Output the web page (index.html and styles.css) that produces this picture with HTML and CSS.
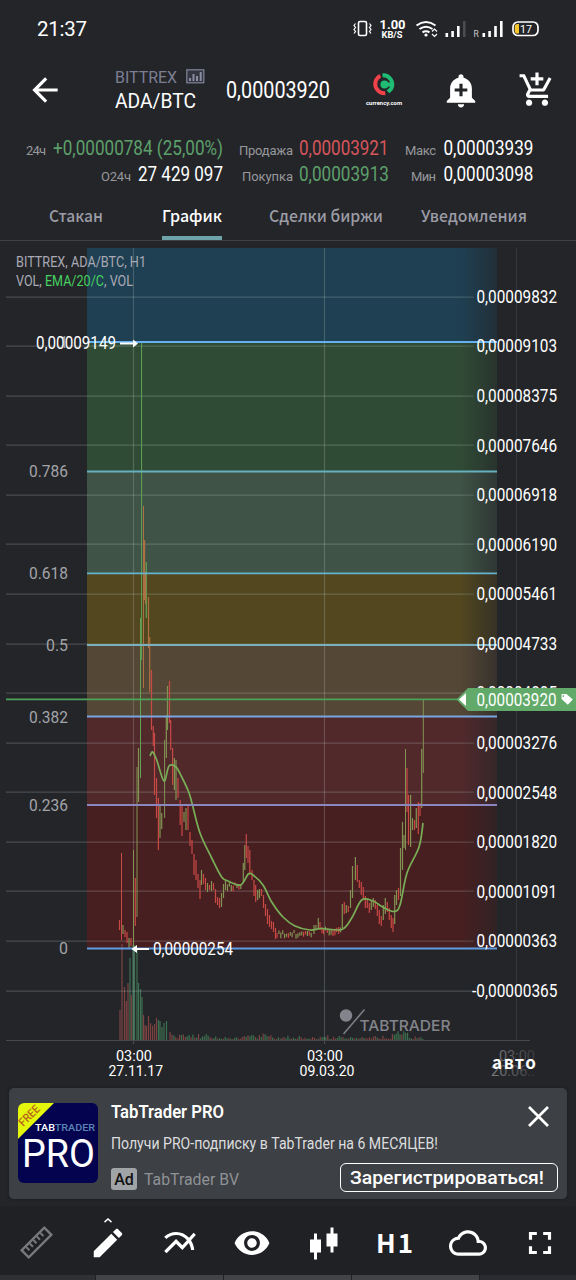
FILE: index.html
```html
<!DOCTYPE html>
<html lang="ru">
<head>
<meta charset="utf-8">
<title>TabTrader</title>
<link rel="stylesheet" href="styles.css">
</head>
<body>
<div class="app">
  <header class="status">
    <svg class="txt clock" width="50" height="20"><text x="0" y="17" textLength="50">21:37</text></svg>
    <svg class="status-icons" width="190" height="24" viewBox="350 17 190 24">
      <rect x="358.500" y="21.500" width="8" height="14" rx="1.500" fill="none" stroke="#fff" stroke-width="1.600"/>
      <path d="M355.500 23.500l-1.500 2 1.500 2-1.500 2 1.500 2-1.500 2M369.500 23.500l1.500 2-1.500 2 1.500 2-1.500 2 1.500 2" fill="none" stroke="#fff" stroke-width="1.200"/>
      <text x="379.500" y="29" font-size="12.500" font-weight="700" textLength="26" lengthAdjust="spacingAndGlyphs">1.00</text>
      <text x="381.500" y="38" font-size="9" font-weight="700" textLength="21" lengthAdjust="spacingAndGlyphs">KB/S</text>
      <g fill="none" stroke="#fff" stroke-width="2">
        <path d="M416.500 25.500q9.500-7 19 0M419.500 29q6.500-4.600 13 0M422.500 32.300q3.500-2.300 7 0"/>
      </g>
      <circle cx="426" cy="35" r="1.600"/>
      <path d="M432 31.500l2.500-2.500 2.500 2.500M432 34l2.500 2.500 2.500-2.500" fill="none" stroke="#fff" stroke-width="1.200"/>
      <path d="M445.500 33h2.600v4h-2.600zM451.300 31h2.600v6h-2.600zM457 26h2.600v11H457z"/>
      <path d="M463 21h2.600v16H463z" fill="#4b4c50"/>
      <text x="473.500" y="37" font-size="8.500" fill="#ccc">R</text>
      <path d="M482.500 33h2.600v4h-2.600zM488.300 31h2.600v6h-2.600zM494.200 26h2.600v11h-2.600zM500 21h2.600v16H500z"/>
      <rect x="513" y="22" width="25" height="13.500" rx="5" fill="none" stroke="#fff" stroke-width="1.700"/>
      <path d="M519 24v9.500h-1.500q-2.800 0-2.800-2.800v-3.900q0-2.800 2.800-2.800z" fill="#f5c52c"/>
      <text x="520" y="33" font-size="11.500" textLength="12" lengthAdjust="spacingAndGlyphs">17</text>
    </svg>
  </header>

  <nav class="topbar">
    <svg class="icon back" viewBox="0 0 24 24"><path d="M20 11H7.830l5.590-5.590L12 4l-8 8 8 8 1.410-1.410L7.830 13H20v-2z"/></svg>
    <div class="pair">
      <div class="exchange">
        <svg class="txt" width="62" height="20"><text x="0" y="15" textLength="62" lengthAdjust="spacingAndGlyphs">BITTREX</text></svg>
        <svg class="bars" width="19" height="15" viewBox="0 0 19 15"><rect x=".8" y=".8" width="17" height="13" fill="#34353f" stroke="#7b7e93" stroke-width="1.300"/><path d="M3 9h2v3H3zM6.500 5h2v7h-2zM10 7h2v5h-2zM13.700 3h2v9h-2z" fill="#8a8da3"/></svg>
      </div>
      <svg class="txt symbol" width="81" height="22"><text x="0" y="17" textLength="81" lengthAdjust="spacingAndGlyphs">ADA/BTC</text></svg>
    </div>
    <svg class="txt last" width="105" height="28"><text x="0" y="22" textLength="104" lengthAdjust="spacingAndGlyphs">0,00003920</text></svg>
    <svg class="brand" width="38" height="36" viewBox="365 71 38 36">
      <path d="M380.300 75.700a9.200 9.200 0 0 0 5 17.400" fill="none" stroke="#f04248" stroke-width="4"/>
      <path d="M382.500 75.200a9.200 9.200 0 0 1 8.600 13.600l-3 3" fill="none" stroke="#1fbd74" stroke-width="4"/>
      <path d="M393 84.500h-9" stroke="#1fbd74" stroke-width="4"/>
      <circle cx="384.500" cy="84.500" r="4" fill="#1fbd74"/>
      <text x="366" y="105" textLength="36" lengthAdjust="spacingAndGlyphs">currency.com</text>
    </svg>
    <svg class="icon bell" viewBox="0 0 24 24"><path d="M10.010 21.010c0 1.100.89 1.990 1.990 1.990s1.990-.89 1.990-1.990h-3.980zm8.870-4.190V11c0-3.250-2.250-5.970-5.290-6.690v-.72C13.590 2.710 12.880 2 12 2s-1.590.71-1.590 1.590v.72C7.370 5.030 5.120 7.750 5.120 11v5.820L3 18.940V20h18v-1.060l-2.120-2.120zM16 13.010h-3v3h-2v-3H8V11h3V8h2v3h3v2.010z"/></svg>
    <svg class="icon cart" viewBox="0 0 24 24"><path d="M11 9h2V6h3V4h-3V1h-2v3H8v2h3v3zm-4 9c-1.100 0-1.990.9-1.990 2S5.900 22 7 22s2-.9 2-2-.9-2-2-2zm10 0c-1.100 0-1.990.9-1.990 2s.89 2 1.990 2 2-.9 2-2-.9-2-2-2zm-9.830-3.250l.03-.12.9-1.630h7.450c.75 0 1.410-.41 1.750-1.030l3.860-7.010L19.420 4h-.01l-1.100 2-2.760 5H8.530l-.13-.27L6.160 6l-.95-2-.94-2H1v2h2l3.600 7.590-1.350 2.450c-.16.28-.25.61-.25.96 0 1.100.9 2 2 2h12v-2H7.420c-.13 0-.25-.11-.25-.25z"/></svg>
  </nav>

  <section class="stats">
    <div class="stat-col">
      <div class="stat"><svg class="txt label" width="20" height="26"><text y="18.800" textLength="20">24ч</text></svg><svg class="txt value up" width="170" height="26"><text y="18.800" textLength="170" lengthAdjust="spacingAndGlyphs">+0,00000784 (25,00%)</text></svg></div>
      <div class="stat"><svg class="txt label" width="30" height="26"><text y="18.800" textLength="30">О24ч</text></svg><svg class="txt value" width="85" height="26"><text y="18.800" textLength="85" lengthAdjust="spacingAndGlyphs">27 429 097</text></svg></div>
    </div>
    <div class="stat-col">
      <div class="stat"><svg class="txt label" width="54" height="26"><text y="18.800" textLength="54">Продажа</text></svg><svg class="txt value down" width="90" height="26"><text y="18.800" textLength="89.500" lengthAdjust="spacingAndGlyphs">0,00003921</text></svg></div>
      <div class="stat"><svg class="txt label" width="51" height="26"><text y="18.800" textLength="51">Покупка</text></svg><svg class="txt value up" width="90" height="26"><text y="18.800" textLength="90" lengthAdjust="spacingAndGlyphs">0,00003913</text></svg></div>
    </div>
    <div class="stat-col">
      <div class="stat"><svg class="txt label" width="31" height="26"><text y="18.800" textLength="31">Макс</text></svg><svg class="txt value" width="90" height="26"><text x=".5" y="18.800" textLength="90" lengthAdjust="spacingAndGlyphs">0,00003939</text></svg></div>
      <div class="stat"><svg class="txt label" width="25" height="26"><text y="18.800" textLength="25">Мин</text></svg><svg class="txt value" width="90" height="26"><text x=".5" y="18.800" textLength="90" lengthAdjust="spacingAndGlyphs">0,00003098</text></svg></div>
    </div>
  </section>

  <nav class="tabs">
    <div class="tab"><svg class="txt" width="54" height="36"><text y="21.500" textLength="54" lengthAdjust="spacingAndGlyphs">Стакан</text></svg></div>
    <div class="tab active"><svg class="txt" width="60" height="36"><text y="21.500" textLength="60" lengthAdjust="spacingAndGlyphs">График</text></svg></div>
    <div class="tab"><svg class="txt" width="114" height="36"><text y="21.500" textLength="114" lengthAdjust="spacingAndGlyphs">Сделки биржи</text></svg></div>
    <div class="tab"><svg class="txt" width="106" height="36"><text y="21.500" textLength="106" lengthAdjust="spacingAndGlyphs">Уведомления</text></svg></div>
  </nav>

  <main class="chart">
    <svg id="chart" width="576" height="847" viewBox="0 241 576 847">
      <defs>
        <linearGradient id="fade" x1="460" x2="520" y1="0" y2="0" gradientUnits="userSpaceOnUse">
          <stop offset="0" stop-color="#242529" stop-opacity="0"/><stop offset=".62" stop-color="#242529" stop-opacity=".62"/><stop offset=".63" stop-color="#242529" stop-opacity=".62"/>
        </linearGradient>
        <linearGradient id="dateFade" x1="495" x2="540" y1="0" y2="0" gradientUnits="userSpaceOnUse">
          <stop offset="0" stop-color="#77787b"/><stop offset="1" stop-color="#303135"/>
        </linearGradient>
      </defs>
      <g id="bands"></g>
      <g id="volume"></g>
      <g id="grid"></g>
      <g id="candles"></g>
      <path id="ema" class="ema" d=""/>
      <path class="price-line" d="M6 699.300H458"/>
      <rect x="460" y="248" width="37" height="699" fill="url(#fade)"/>
      <g id="levels"></g>
      <g class="legend">
        <text x="16" y="267" textLength="130" lengthAdjust="spacingAndGlyphs">BITTREX, ADA/BTC, H1</text>
        <text x="16" y="285.500" textLength="117" lengthAdjust="spacingAndGlyphs">VOL, <tspan class="legend-ema">EMA/20/C</tspan>, VOL</text>
      </g>
      <g id="labels"></g>
      <g class="marker">
        <text x="36" y="349.300" textLength="80" lengthAdjust="spacingAndGlyphs">0,00009149</text>
        <path d="M120 342.500h13v-3l5 4-5 4v-3h-13z"/>
        <text x="153" y="954.800" textLength="80" lengthAdjust="spacingAndGlyphs">0,00000254</text>
        <path d="M149 948h-12v-3l-5.500 4 5.500 4v-3h12z"/>
      </g>
      <g class="watermark">
        <circle cx="346" cy="1015.500" r="6.200"/>
        <path d="M343.500 1034L364.500 1009.500" stroke="#7c7d84" stroke-width="1.600"/>
        <text x="359.500" y="1031.300" textLength="91" lengthAdjust="spacingAndGlyphs">TABTRADER</text>
      </g>
      <g class="dates">
        <text x="116" y="1061" textLength="36" lengthAdjust="spacingAndGlyphs">03:00</text>
        <text x="108.500" y="1075.700" textLength="54.500" lengthAdjust="spacingAndGlyphs">27.11.17</text>
        <text x="307" y="1061" textLength="36" lengthAdjust="spacingAndGlyphs">03:00</text>
        <text x="299.500" y="1075.700" textLength="55" lengthAdjust="spacingAndGlyphs">09.03.20</text>
        <text x="499" y="1061" textLength="36" lengthAdjust="spacingAndGlyphs" fill="url(#dateFade)">03:00</text>
        <text x="491" y="1075.700" textLength="44" lengthAdjust="spacingAndGlyphs" fill="url(#dateFade)">20.06..</text>
      </g>
      <text class="auto" x="492" y="1069" textLength="44">авто</text>
      <g>
        <path d="M456.500 699.500L468 688H576V711H468z" fill="#62aa69"/>
        <path d="M459 699.500l7-6.500v13z" fill="#fff"/>
        <text class="axis" x="476.500" y="705.700" textLength="80" lengthAdjust="spacingAndGlyphs">0,00003920</text>
        <path d="M561.500 694h5l6.300 5.500-5 5.200-6.300-5.700v-5zm1.700 1.200a.8.8 0 1 0 .1 0z" fill="#fff" fill-rule="evenodd"/>
      </g>
    </svg>
  </main>

  <aside class="ad">
    <svg class="ad-logo" width="80" height="80" viewBox="0 0 80 80">
      <clipPath id="logoClip"><rect width="80" height="80" rx="6"/></clipPath>
      <g clip-path="url(#logoClip)">
        <rect width="80" height="80" fill="#03034f"/>
        <path d="M0 0H36L0 36z" fill="#e5f60d"/>
        <text x="5.300" y="24" font-size="11.500" font-weight="500" fill="#b7651c" textLength="24.500" lengthAdjust="spacingAndGlyphs" transform="rotate(-45 5.300 24)">FREE</text>
        <text x="17" y="27.800" font-size="9.800" font-weight="500" fill="#fff" textLength="60" lengthAdjust="spacingAndGlyphs">TAB<tspan fill="#5b85b5">TRADER</tspan></text>
        <text x="4" y="64" font-size="38" fill="#fff" textLength="73" lengthAdjust="spacingAndGlyphs">PRO</text>
      </g>
    </svg>
    <div class="ad-body">
      <div class="ad-head">
        <svg class="txt ad-title" width="113" height="26"><text y="19" textLength="113" lengthAdjust="spacingAndGlyphs">TabTrader PRO</text></svg>
        <svg class="close" width="21" height="21" viewBox="0 0 21 21"><path d="M1 1l19 19M20 1L1 20"/></svg>
      </div>
      <svg class="txt ad-text" width="327" height="26"><text y="18.500" textLength="327" lengthAdjust="spacingAndGlyphs">Получи PRO-подписку в TabTrader на 6 МЕСЯЦЕВ!</text></svg>
      <div class="ad-foot">
        <span class="badge">Ad</span>
        <svg class="txt ad-by" width="95" height="24"><text y="18" textLength="95" lengthAdjust="spacingAndGlyphs">TabTrader BV</text></svg>
        <div class="button"><svg class="txt" width="194" height="26"><text y="20" textLength="194" lengthAdjust="spacingAndGlyphs">Зарегистрироваться!</text></svg></div>
      </div>
    </div>
  </aside>

  <footer class="toolbar">
    <div class="tool"><svg class="icon" viewBox="0 0 38 38"><g transform="translate(19.500 18.500) rotate(-45)" fill="none" stroke="#77797c"><rect x="-16" y="-5" width="32" height="10" stroke-width="2.400"/><path d="M-10.500-4v4.500M-5.500-4v4.500M-.5-4v4.500M4.500-4v4.500M9.500-4v4.500" stroke-width="2"/></g></svg></div>
    <div class="tool"><svg class="icon" viewBox="0 0 24 24"><path d="M3 17.250V21h3.750L17.810 9.940l-3.750-3.750L3 17.250zM20.710 7.040c.39-.39.39-1.020 0-1.410l-2.340-2.340c-.39-.39-1.020-.39-1.410 0l-1.830 1.830 3.750 3.750 1.830-1.830z"/><path d="M9.800-1.200L12-3.200l2.200 2" fill="none" stroke="#fff" stroke-width=".9"/></svg></div>
    <div class="tool"><svg class="icon" viewBox="0 0 24 24"><path d="M22 6.920l-1.410-1.410-2.850 3.210C15.680 6.400 12.830 5 9.610 5 6.720 5 4.070 6.160 2 8l1.420 1.420C5.120 7.930 7.270 7 9.610 7c2.740 0 5.090 1.260 6.770 3.240l-2.880 3.240-4-4L2 16.990l1.500 1.500 6-6.010 4 4 4.050-4.550c.75 1.350 1.250 2.900 1.440 4.550H21c-.22-2.300-.95-4.390-2.040-6.140L22 6.920z"/></svg></div>
    <div class="tool"><svg class="icon" viewBox="0 0 24 24"><path d="M12 4.500C7 4.500 2.730 7.610 1 12c1.730 4.390 6 7.500 11 7.500s9.270-3.110 11-7.500c-1.730-4.390-6-7.500-11-7.500zM12 17c-2.760 0-5-2.240-5-5s2.240-5 5-5 5 2.240 5 5-2.240 5-5 5zm0-8c-1.660 0-3 1.340-3 3s1.340 3 3 3 3-1.340 3-3-1.340-3-3-3z"/></svg></div>
    <div class="tool"><svg class="icon" viewBox="0 0 38 38"><path d="M9 9.500h3v6h4v13h-4v7H9v-7H5v-13h4zM25.500 3.500h3v6h4v13h-4v6h-3v-6h-4v-13h4z"/></svg></div>
    <div class="tool"><svg class="txt frame" width="38" height="38"><text x="-1" y="29" textLength="37">H1</text></svg></div>
    <div class="tool"><svg class="icon" viewBox="0 0 24 24"><path d="M19.350 10.040C18.670 6.590 15.640 4 12 4 9.110 4 6.600 5.640 5.350 8.040 2.340 8.360 0 10.910 0 14c0 3.310 2.690 6 6 6h13c2.760 0 5-2.240 5-5 0-2.640-2.050-4.780-4.650-4.960zM19 18H6c-2.210 0-4-1.790-4-4s1.790-4 4-4h.71C7.370 7.690 9.480 6 12 6c3.040 0 5.500 2.460 5.500 5.500v.5H19c1.660 0 3 1.340 3 3s-1.340 3-3 3z"/></svg></div>
    <div class="tool"><svg class="icon" viewBox="0 0 24 24"><path d="M7 14H5v5h5v-2H7v-3zm-2-4h2V7h3V5H5v5zm12 7h-3v2h5v-5h-2v3zM14 5v2h3v3h2V5h-5z"/></svg></div>
  </footer>
  <div class="strip"><i></i><i></i><i></i><i></i><i></i></div>
</div>
<script src="chart.js"></script>
</body>
</html>
```
FILE: styles.css
```css
* { box-sizing: border-box; }
body { margin: 0; background: #242529; font-family: Roboto, "Noto Sans", sans-serif; color: #fff; }
svg { display: block; fill: #fff; flex: none; }
.app { width: 576px; height: 1280px; overflow: hidden; display: flex; flex-direction: column; }
.txt { overflow: visible; }
.icon { width: 38px; height: 38px; overflow: visible; }

.status { height: 58px; padding: 17px 36px 0 37px; display: flex; justify-content: space-between; }
.clock { font-size: 20.5px; margin-top: 2px; }

.topbar { height: 78px; padding-left: 26px; display: flex; align-items: flex-start; }
.back { margin-top: 12.5px; }
.pair { margin: 10px 0 0 51px; width: 111px; }
.exchange { display: flex; gap: 9px; font-size: 16.5px; }
.exchange .txt { fill: #7b7e93; }
.bars { margin-top: 1px; }
.symbol { font-size: 19.5px; margin-top: 3px; }
.last { margin-top: 18px; font-size: 23px; }
.brand { margin: 13px 0 0 34px; font-size: 6px; font-weight: 700; }
.bell { margin: 12.5px 0 0 38.5px; }
.cart { margin: 12.5px 0 0 38.5px; }

.stats { height: 64px; display: flex; gap: 16px; padding-left: 26px; }
.stat-col { display: flex; flex-direction: column; align-items: flex-end; }
.stat { display: flex; gap: 7px; }
.stat-col:nth-child(2) .stat { gap: 6px; }
.label { font-size: 13px; fill: #97989c; }
.value { font-size: 19.5px; }
.up { fill: #5da06b; }
.down { fill: #d7555b; }

.tabs { height: 41px; display: flex; padding-left: 49px; border-bottom: 1px solid #404145; font: 500 16.5px "Noto Sans CJK SC", "Noto Sans", sans-serif; }
.tab { height: 40px; margin-right: 47px; }
.tab:first-child { margin-right: 59px; }
.tab:nth-child(3) { margin-right: 38px; }
.tab .txt { fill: #9b9ca5; }
.tab.active .txt { fill: #fff; }
.tab.active { border-bottom: 4px solid #6fa3aa; border-radius: 2px 2px 0 0; }

.chart { height: 847px; flex: none; }
.grid-line { stroke: #d8ecec; stroke-opacity: .2; stroke-width: 1.2; }
.ema { fill: none; stroke: #79ae58; stroke-width: 1.7; stroke-linejoin: round; }
.price-line { stroke: #4ba35b; stroke-width: 1.7; }
.legend { fill: #a8a9b4; font-size: 15px; }
.legend-ema { fill: #46d160; }
.axis { font-size: 17.8px; }
.fib { font-size: 17px; fill: #a3a4a8; }
.marker { font-size: 18px; }
.watermark { fill: #84858c; font: 500 15px Inter, sans-serif; }
.dates { font-size: 14.8px; }
.auto { font: 700 17px "Noto Sans CJK SC", "Noto Sans", sans-serif; }

.ad { margin: 0 9px; height: 111px; flex: none; display: flex; gap: 13px; background: #3d4044; border-radius: 5px; padding: 0 9px; box-shadow: 0 0 3px #1c1d20; }
.ad-logo { margin-top: 15px; }
.ad-body { flex: 1; display: flex; flex-direction: column; }
.ad-head { display: flex; justify-content: space-between; height: 42px; padding: 11px 9px 0 0; }
.ad-title { font-size: 19px; font-weight: 600; }
.close { margin-top: 7px; stroke: #fff; stroke-width: 2.7; }
.ad-text { font-size: 16px; fill: #dcdddf; }
.ad-foot { display: flex; align-items: flex-start; padding-top: 7px; }
.badge { width: 26px; height: 22px; margin-top: 5px; border-radius: 3px; background: #a0a4a7; color: #111; font-size: 16px; font-weight: 500; line-height: 23px; text-align: center; }
.ad-by { margin: 4px 0 0 7px; font-size: 16px; fill: #8f9296; }
.button { width: 218px; height: 29px; margin-left: auto; border: 1.5px solid #fff; border-radius: 6px; padding-left: 9px; font-size: 19px; font-weight: 500; }

.toolbar { margin-top: 7px; height: 69px; flex: none; background: #202125; display: grid; grid-template-columns: repeat(8, 72px); padding-top: 18px; }
.tool { padding-left: 17.3px; }
.tool:first-child { padding-left: 17px; }
.frame { font: 700 26px "Noto Sans CJK SC", "Noto Sans", sans-serif; }

.strip { display: flex; gap: 1px; height: 5px; background: #202125; }
.strip i { flex: none; background: #424347; width: 127px; }
.strip i:first-child { width: 95px; background: #2f3034; }
.strip i:last-child { background: #2a2b30; }
```
FILE: chart.js
```js
const NS = 'http://www.w3.org/2000/svg';
const add = (group, tag, attrs, text) => {
  const el = document.createElementNS(NS, tag);
  for (const k in attrs) el.setAttribute(k, attrs[k]);
  if (text) el.textContent = text;
  document.getElementById(group).appendChild(el);
};
const GREEN = '#829354', RED = '#c94945';

// Fibonacci zones: top, bottom, fill, colour of the line at the bottom
const zones = [
  [248, 342, '#1f4052', '#65b0ee'],
  [342, 471.5, '#304b35', '#67b0c0'],
  [471.5, 573.3, '#3f5346', '#65b3cf'],
  [573.3, 645, '#52471f', '#7bafc0'],
  [645, 716.5, '#554735', '#79a5e0'],
  [716.5, 805, '#52292b', '#8a86bf'],
  [805, 948.5, '#481f20', '#5e9be0']
];
zones.forEach(([a, b, fill, line]) => {
  add('bands', 'rect', { x: 87, y: a, width: 410, height: b - a, fill });
  add('levels', 'path', { d: `M87 ${b}H497`, stroke: line, 'stroke-width': 1.8 });
});
[['1', 60, 8, 348], ['0.786', 29, 39, 477.3], ['0.618', 29, 39, 579.3], ['0.5', 46, 22, 651], ['0.382', 29, 39, 722.5], ['0.236', 29, 39, 811], ['0', 59, 9, 954.3]]
  .forEach(([t, x, w, y]) => add('labels', 'text', { class: 'fib', x, y, textLength: w, lengthAdjust: 'spacingAndGlyphs' }, t));

const prices = ['0,00009832', '0,00009103', '0,00008375', '0,00007646', '0,00006918', '0,00006190', '0,00005461', '0,00004733', '0,00004005', '0,00003276', '0,00002548', '0,00001820', '0,00001091', '0,00000363', '-0,00000365'];
prices.forEach((p, i) => {
  const y = 296.6 + i * 49.57;
  add('grid', 'path', { class: 'grid-line', d: `M6 ${Math.round(y)}.2H474` });
  const neg = p[0] === '-';
  add('labels', 'text', { class: 'axis', x: neg ? 472 : 476.5, y: y + 6.3, textLength: neg ? 85.5 : 80.5, lengthAdjust: 'spacingAndGlyphs' }, p);
});
['M133.500 248V1044', 'M324.500 248V1044'].forEach(d => add('grid', 'path', { class: 'grid-line', d }));
add('grid', 'path', { d: 'M516.500 248V1040', stroke: '#35363a' });
add('grid', 'path', { d: 'M6 1040.500H530', stroke: '#47484b' });

// x, high, low, direction
const candles = [
  [119.5,920,930,0],[121.5,853,940,0],[123,925,934,1],[125,930,937,0],[127,932,943,0],[129,938,948,1],[131,938,946,0],
  [133.5,850,948,1],[135.3,878,926,0],[137,767,917,1],[138.5,748,802,1],[140.5,618,778,1],[141.6,343,660,1],
  [143.5,506,688,0],[144.6,540,600,0],[146.3,562,618,1],[145.5,572,604,0],[148.5,597,648,0],[149.7,637,692,0],[151.5,670,730,0],
  [153.3,726,746,0],[154.5,733,795,0],[156.5,778,818,0],[158.4,798,850,0],[160,806,838,1],[161.7,813,829,1],
  [164.6,740,818,1],[166.3,715,758,1],[167.5,686,730,1],[169.5,681,723,0],[170.7,720,750,0],[172.6,748,785,0],[174.4,758,790,1],
  [176,760,800,1],[178,778,798,0],[180.2,800,825,0],[182,804,836,0],[184,812,822,1],[186,808,830,1],[188,805,830,0],
  [190,832,846,0],[192,840,854,0],[194,854,875,0],[196,860,880,0],[198,874,888,0],[200,880,899,0],[201.5,870,885,1],
  [203.5,874,884,0],[205.5,878,890,0],[207.5,883,892,1],[209.5,885,890,0],[211.5,881,891,1],[213.5,883,890,0],
  [215.5,889,903,0],[217.5,897,905,0],[219.5,898,908,0],[221.5,893,907,1],[223.5,884,898,1],[225.5,881,890,1],
  [243.3,863,883,1],[244.8,845,870,1],[246.3,834,858,0],[248,846,863,0],[249.8,850,875,0],[252,870,880,0],[254,880,896,0],
  [255.7,885,902,0],[257.7,890,900,1],[259.5,889,898,1],[261.5,889,896,0],[263.5,895,908,0],[265.5,904,916,0],
  [267.5,909,924,0],[269.5,915,927,0],[271.5,921,929,0],[273.5,922,932,0],[275.5,928,939,0],
  [314,925,934,1],[316,925,930,1],[318.3,918,928,1],[320,922,930,0],[322,927,933,0],
  [342.3,904,928,1],[344.3,902,914,0],[346.3,905,913,1],[348.3,906,912,0],[350.5,890,908,1],[352.5,866,898,1],
  [355.4,857,880,1],[357.3,865,882,0],[359.3,880,888,0],[361.3,882,895,0],[363.3,887,900,0],[365.3,896,908,0],
  [367.3,900,908,0],[369.3,903,913,0],[371.3,900,910,1],[373.3,898,907,1],[375.3,900,909,0],[377.3,905,916,0],
  [379.3,910,924,0],[381.3,916,926,0],[383.3,905,920,1],[385.3,898,914,1],[387.3,902,912,0],[389.3,908,920,0],
  [391.3,915,928,0],[393,918,932,0],[394.7,895,924,1],[396.5,890,905,1],[398.5,888,900,0],[400.5,848,896,1],
  [402.5,822,870,1],[404,835,848,1],[405.5,749,850,1],[407,768,812,0],[408.5,795,845,0],[410.6,795,847,1],
  [412.5,818,830,1],[414.5,820,830,0],[416.3,808,828,1],[418.3,802,834,0],[420,803,816,0],[421.7,749,808,1],[423.3,699,773,1]
];
const noise = n => { const v = Math.sin(n * 12.9898) * 43758.5453; return v - Math.floor(v); };
// Quiet stretches: from x, to x, base y
[[227.5, 242, 882], [277, 313, 930], [323.5, 341, 926]].forEach(([a, b, base]) => {
  for (let x = a; x < b; x += 1.9) {
    const top = base + noise(x) * 4;
    candles.push([x, top, top + 3 + noise(x + 7) * 4, noise(x + 3) > .5 ? 1 : 0]);
  }
});
candles.forEach(([x, hi, lo, up]) => add('candles', 'path', {
  d: `M${x} ${hi}V${lo}`,
  stroke: up ? (hi < 640 ? '#60a355' : GREEN) : (hi < 650 ? '#ad7042' : RED),
  'stroke-width': lo - hi > 70 ? 1 : 1.2
}));

// x, height, direction
const volumes = [[120,30,0],[122,96,0],[124.5,53,0],[126.3,39,0],[128,57,0],[130,82,1],[131.3,45,0],[133,95,1],[134.5,95,1],[137,90,1],[138.5,57,1],[140.5,51,1],[142,43,1],[143.5,25,0],[145,15,0],[146.5,14,0],[148.5,24,0],[150.5,17,0],[152.5,14,0],[154.5,16,0],[156.5,22,0],[158.5,20,1],[160,19,1],[162,13,1],[164,17,1],[166.5,19,1],[170,8,0]];
for (let x = 172; x < 424; x += 1.9) {
  const burst = (x > 392 && x < 408) ? 6 : (x > 240 && x < 270) ? 3 : x < 215 ? 3 : 0;
  volumes.push([x, 1 + noise(x) * noise(x + 2) * 5 + noise(x + 1) * burst, noise(x + 5) < .5 ? 0 : 1]);
}
volumes.forEach(([x, h, up]) => add('volume', 'path', {
  d: `M${x} ${1040 - h}V1040`,
  stroke: up ? '#3d7050' : '#7d4343',
  'stroke-width': 1.2
}));

const ema = [[150,756],[152.7,752],[156.7,760],[164,781],[169,766],[176,767],[181.7,777],[188.3,791],[191.7,802],[200,833],[211.7,858],[221.7,877],[228,881],[240.7,885],[248.3,874],[253,875],[263,885],[271.7,902],[283,917],[295,926],[310,930],[321.7,928.5],[341.7,929.5],[351.7,918],[361.7,900],[373,901],[382.7,907],[394,911.5],[400,905],[407,873],[419,847],[423,823]];
// Catmull-Rom smoothing through the average points
let d = `M${ema[0]}`;
for (let i = 0; i < ema.length - 1; i++) {
  const p = ema[Math.max(i - 1, 0)], a = ema[i], b = ema[i + 1], n = ema[Math.min(i + 2, ema.length - 1)];
  d += `C${a[0] + (b[0] - p[0]) / 6} ${a[1] + (b[1] - p[1]) / 6} ${b[0] - (n[0] - a[0]) / 6} ${b[1] - (n[1] - a[1]) / 6} ${b}`;
}
document.getElementById('ema').setAttribute('d', d);
```
